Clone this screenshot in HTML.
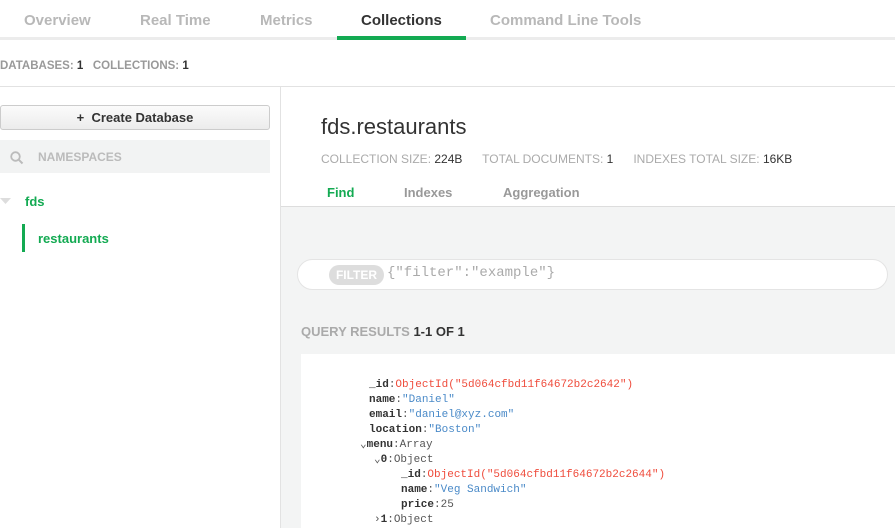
<!DOCTYPE html>
<html><head><style>
*{margin:0;padding:0;box-sizing:border-box}
body{width:895px;height:528px;overflow:hidden;background:#fff;font-family:"Liberation Sans",sans-serif;position:relative}
.a{position:absolute;white-space:nowrap}
.tab{font-size:15px;color:#b8b8b8;top:12px;font-weight:bold}
.mono{font-family:"Liberation Mono",monospace;font-size:11px}
.k{font-weight:bold;color:#333}
.r{color:#ef4c3c}.b{color:#4a8ac8}.d{color:#555}
</style></head><body>
<div class="a" style="left:0;top:37px;width:895px;height:3px;background:#ececec"></div>
<div class="a" style="left:337px;top:36px;width:129px;height:4px;background:#13aa52"></div>
<div class="a tab" style="left:24px">Overview</div>
<div class="a tab" style="left:140px">Real Time</div>
<div class="a tab" style="left:260px">Metrics</div>
<div class="a tab" style="left:361px;color:#333">Collections</div>
<div class="a tab" style="left:490px">Command Line Tools</div>
<div class="a" style="left:0;top:60px;font-size:11.5px;font-weight:bold;color:#999">DATABASES: <span style="color:#333">1</span>&nbsp;&nbsp; COLLECTIONS: <span style="color:#333">1</span></div>
<div class="a" style="left:0;top:86px;width:895px;height:1px;background:#e2e2e2"></div>
<div class="a" style="left:280px;top:87px;width:1px;height:441px;background:#e2e2e2"></div>
<div class="a" style="left:0;top:105px;width:270px;height:25px;border:1px solid #ccc;border-radius:3px;background:linear-gradient(#fbfbfb,#ececec);font-size:13px;font-weight:bold;color:#333;text-align:center;line-height:23px">+&nbsp; Create Database</div>
<div class="a" style="left:0;top:140px;width:270px;height:33px;background:#f2f3f3"></div>
<svg class="a" style="left:10px;top:151px" width="14" height="14"><circle cx="5.5" cy="5.5" r="4.3" fill="none" stroke="#bbb" stroke-width="1.8"/><line x1="8.6" y1="8.6" x2="12.5" y2="12.5" stroke="#bbb" stroke-width="2"/></svg>
<div class="a" style="left:38px;top:150px;font-size:12px;font-weight:bold;color:#bbb">NAMESPACES</div>
<svg class="a" style="left:0;top:198px" width="12" height="8"><path d="M0 0H11L5.5 6Z" fill="#ddd"/></svg>
<div class="a" style="left:25px;top:194px;font-size:13px;font-weight:bold;color:#13aa52">fds</div>
<div class="a" style="left:22px;top:224px;width:3px;height:28px;background:#13aa52"></div>
<div class="a" style="left:38px;top:231px;font-size:13px;font-weight:bold;color:#13aa52">restaurants</div>
<div class="a" style="left:321px;top:114px;font-size:22px;color:#333">fds.restaurants</div>
<div class="a" style="left:321px;top:152px;font-size:12px;color:#aaa">COLLECTION SIZE: <span style="color:#333">224B</span>&nbsp;&nbsp;&nbsp;&nbsp;&nbsp; TOTAL DOCUMENTS: <span style="color:#333">1</span>&nbsp;&nbsp;&nbsp;&nbsp;&nbsp; INDEXES TOTAL SIZE: <span style="color:#333">16KB</span></div>
<div class="a" style="left:327px;top:185px;font-size:13px;font-weight:bold;color:#13aa52">Find</div>
<div class="a" style="left:404px;top:185px;font-size:13px;font-weight:bold;color:#999">Indexes</div>
<div class="a" style="left:503px;top:185px;font-size:13px;font-weight:bold;color:#999">Aggregation</div>
<div class="a" style="left:281px;top:206px;width:614px;height:322px;background:#f3f4f4;border-top:1px solid #ddd"></div>
<div class="a" style="left:297px;top:259px;width:591px;height:31px;background:#fff;border:1px solid #e4e4e4;border-radius:16px"></div>
<div class="a" style="left:329px;top:265px;width:55px;height:20px;border-radius:10px;background:#ddd;color:#fff;font-size:12px;font-weight:bold;text-align:center;line-height:20px">FILTER</div>
<div class="a mono" style="left:387px;top:265px;font-size:14px;color:#aaa">{"filter":"example"}</div>
<div class="a" style="left:301px;top:324px;font-size:13px;font-weight:bold;color:#aaa">QUERY RESULTS <span style="color:#333">1-1 OF 1</span></div>
<div class="a" style="left:301px;top:354px;width:594px;height:174px;background:#fff"></div>
<div class="a mono" style="left:369px;top:378px;line-height:15px">
<div><span class="k">_id</span><span class="d">:</span><span class="r">ObjectId("5d064cfbd11f64672b2c2642")</span></div>
<div><span class="k">name</span><span class="d">:</span><span class="b">"Daniel"</span></div>
<div><span class="k">email</span><span class="d">:</span><span class="b">"daniel@xyz.com"</span></div>
<div><span class="k">location</span><span class="d">:</span><span class="b">"Boston"</span></div>
<div style="margin-left:-9px"><span class="d">⌄</span><span class="k">menu</span><span class="d">:Array</span></div>
<div style="margin-left:5px"><span class="d">⌄</span><span class="k">0</span><span class="d">:Object</span></div>
<div style="margin-left:32px"><span class="k">_id</span><span class="d">:</span><span class="r">ObjectId("5d064cfbd11f64672b2c2644")</span></div>
<div style="margin-left:32px"><span class="k">name</span><span class="d">:</span><span class="b">"Veg Sandwich"</span></div>
<div style="margin-left:32px"><span class="k">price</span><span class="d">:25</span></div>
<div style="margin-left:5px"><span class="d">›</span><span class="k">1</span><span class="d">:Object</span></div>
</div>
</body></html>
